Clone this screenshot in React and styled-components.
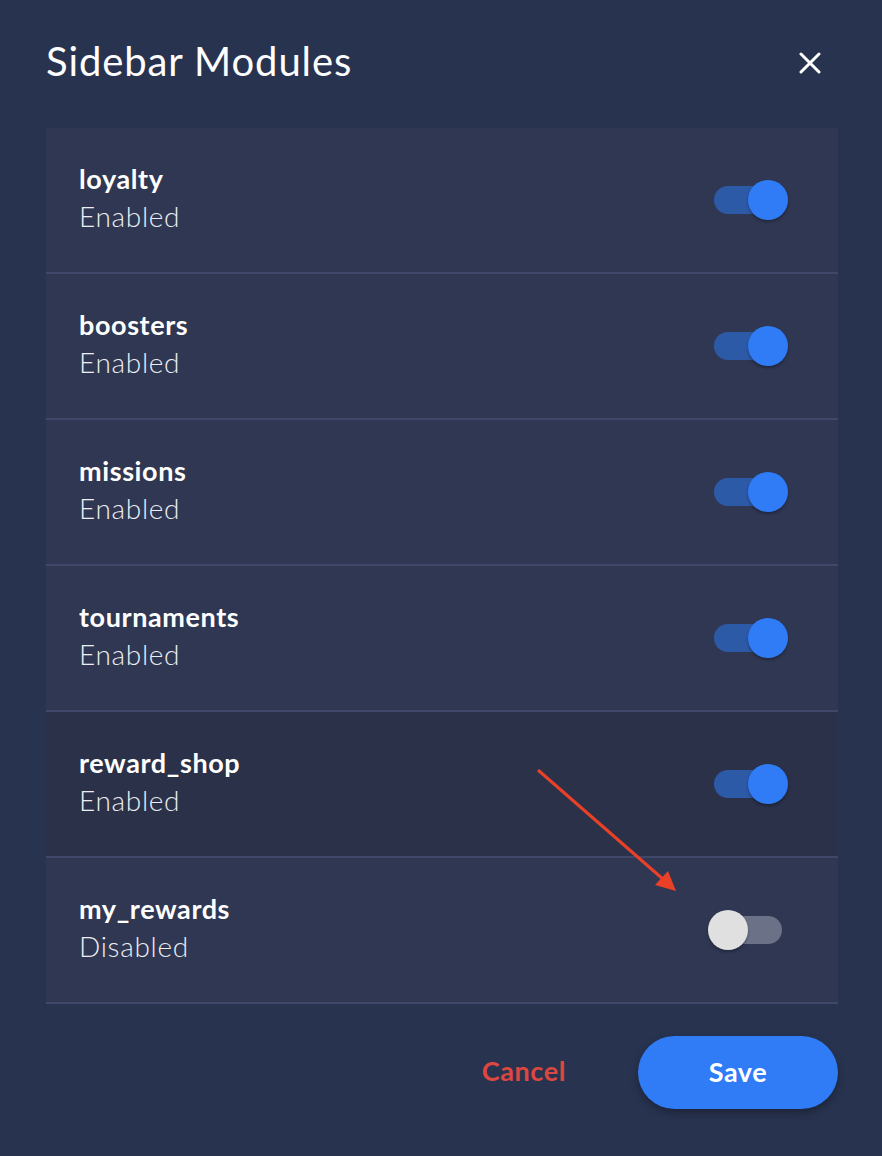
import React from 'react';
import styled, { createGlobalStyle } from 'styled-components';

const GlobalStyle = createGlobalStyle`
  html, body {
    margin: 0;
    padding: 0;
    background: #283350;
  }
  * {
    box-sizing: border-box;
  }
`;

const Modal = styled.div`
  position: relative;
  width: 882px;
  height: 1156px;
  padding: 0 44px 0 46px;
  background: #283350;
  font-family: Lato, 'Noto Sans', sans-serif;
  color: #ffffff;
`;

const Header = styled.div`
  height: 128px;
  display: flex;
  align-items: flex-start;
  justify-content: space-between;
  padding-top: 37px;
`;

const Title = styled.h1`
  margin: 0;
  font-size: 40px;
  font-weight: 400;
  line-height: 48px;
  letter-spacing: 0.9px;
`;

const CloseButton = styled.button`
  width: 40px;
  height: 40px;
  margin-top: 6px;
  margin-right: 8px;
  padding: 0;
  border: none;
  background: none;
  display: flex;
  align-items: center;
  justify-content: center;
  cursor: pointer;
`;

const List = styled.div`
  display: flex;
  flex-direction: column;
`;

const Row = styled.div`
  height: 146px;
  display: flex;
  align-items: center;
  justify-content: space-between;
  padding: 0 50px 4px 33px;
  background: ${p => (p.hovered ? '#2a3149' : '#2f3753')};
  border-bottom: 2px solid #40486a;
`;

const Info = styled.div`
  display: flex;
  flex-direction: column;
  gap: 4px;
`;

const Name = styled.div`
  font-size: 27px;
  font-weight: 700;
  line-height: 32px;
  letter-spacing: 0.6px;
`;

const Status = styled.div`
  font-size: 28px;
  font-weight: 300;
  line-height: 34px;
  letter-spacing: 0.7px;
  color: #eceef2;
`;

const Switch = styled.div`
  position: relative;
  width: 80px;
  height: 40px;
  margin-top: 4px;
  cursor: pointer;
`;

const Track = styled.div`
  position: absolute;
  left: 6px;
  right: 6px;
  top: 6px;
  height: 28px;
  border-radius: 14px;
  background: ${p => (p.on ? '#2d5aa7' : '#6b7288')};
`;

const Knob = styled.div`
  position: absolute;
  top: 0;
  left: ${p => (p.on ? '40px' : '0')};
  width: 40px;
  height: 40px;
  border-radius: 50%;
  background: ${p => (p.on ? '#2f7cf6' : '#e0e0e0')};
  box-shadow: 0 2px 3px rgba(0, 0, 0, 0.3);
`;

const Footer = styled.div`
  display: flex;
  justify-content: flex-end;
  align-items: center;
  gap: 72px;
  padding-top: 32px;
`;

const CancelButton = styled.button`
  border: none;
  background: none;
  padding: 0 0 5px;
  font-family: inherit;
  font-size: 27px;
  font-weight: 700;
  letter-spacing: 0.6px;
  color: #dc4740;
  cursor: pointer;
`;

const SaveButton = styled.button`
  width: 200px;
  height: 73px;
  padding: 0 0 2px;
  border: none;
  border-radius: 37px;
  background: #2f7cf6;
  color: #ffffff;
  font-family: inherit;
  font-size: 27px;
  font-weight: 700;
  letter-spacing: 0.5px;
  box-shadow: 0 4px 8px rgba(0, 0, 0, 0.3);
  cursor: pointer;
`;

const Annotation = styled.svg`
  position: absolute;
  left: 0;
  top: 0;
  pointer-events: none;
`;

const modules = [
  { name: 'loyalty', on: true },
  { name: 'boosters', on: true },
  { name: 'missions', on: true },
  { name: 'tournaments', on: true },
  { name: 'reward_shop', on: true, hovered: true },
  { name: 'my_rewards', on: false },
];

const Toggle = ({ on }) => (
  <Switch>
    <Track on={on} />
    <Knob on={on} />
  </Switch>
);

const App = () => (
  <>
    <GlobalStyle />
    <Modal>
      <Header>
        <Title>Sidebar Modules</Title>
        <CloseButton aria-label="Close">
          <svg width="22" height="22" viewBox="0 0 22 22">
            <path d="M2 2 L20 20 M20 2 L2 20" stroke="#fff" strokeWidth="3" strokeLinecap="round" />
          </svg>
        </CloseButton>
      </Header>
      <List>
        {modules.map(m => (
          <Row key={m.name} hovered={m.hovered}>
            <Info>
              <Name>{m.name}</Name>
              <Status>{m.on ? 'Enabled' : 'Disabled'}</Status>
            </Info>
            <Toggle on={m.on} />
          </Row>
        ))}
      </List>
      <Footer>
        <CancelButton>Cancel</CancelButton>
        <SaveButton>Save</SaveButton>
      </Footer>
      <Annotation width="882" height="1156">
        <line x1="538" y1="770" x2="664" y2="880" stroke="#ea4028" strokeWidth="3" />
        <polygon points="676,891 655,885 668,871" fill="#ea4028" />
      </Annotation>
    </Modal>
  </>
);

export default App;
